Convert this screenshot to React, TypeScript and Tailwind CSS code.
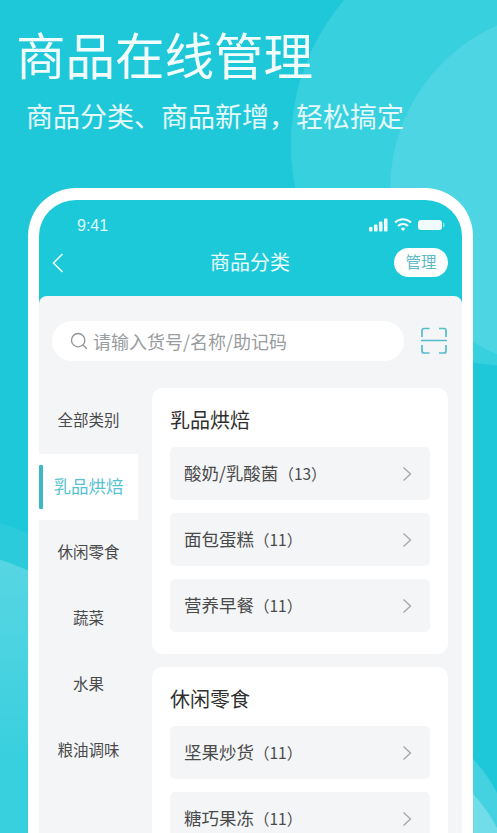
import { Search } from "lucide-react";

const font = "font-['Noto_Sans_CJK_SC','Noto_Sans',sans-serif]";

function Chevron() {
  return (
    <svg width="10" height="16" viewBox="0 0 10 16" fill="none" stroke="#a3a7ab" strokeWidth="1.3">
      <path d="M1.5 1.5 8.5 8 1.5 14.5" />
    </svg>
  );
}

function Item({ name, count }: { name: string; count: string }) {
  return (
    <div className="flex h-[53px] items-center justify-between rounded-[5px] bg-[#f3f5f7] pl-[14px] pr-[18px]">
      <span className="text-[17.5px] text-[#4a4a4a]">
        {name}
        <span className="text-[15.5px]">（{count}）</span>
      </span>
      <Chevron />
    </div>
  );
}

function Card({ title, items }: { title: string; items: [string, string][] }) {
  return (
    <div className="rounded-[10px] bg-white px-[18px] pb-[22px] pt-[15px]">
      <div className="text-[20px] leading-[34px] text-[#2f2f2f]">{title}</div>
      <div className="mt-[10px] flex flex-col gap-[13px]">
        {items.map(([n, c]) => (
          <Item key={n} name={n} count={c} />
        ))}
      </div>
    </div>
  );
}

const cats = ["全部类别", "乳品烘焙", "休闲零食", "蔬菜", "水果", "粮油调味"];

export default function App() {
  return (
    <div className={`relative h-[833px] w-[497px] overflow-hidden bg-[#1fc8d9] ${font}`}>
      <div className="absolute left-[291px] top-[-78px] h-[444px] w-[444px] rounded-full bg-[#37d0df]" />
      <div className="absolute left-[390px] top-[10px] h-[360px] w-[360px] rounded-full bg-[#4dd5e3]" />
      <div className="absolute left-[-285px] top-[515px] h-[450px] w-[450px] rounded-full bg-[#2ccbdb]" />
      <div className="absolute left-[-269px] top-[551px] h-[418px] w-[418px] rounded-full bg-gradient-to-b from-[#58d6e3] to-[#38cfde] to-50%" />
      <div className="absolute left-[217px] top-[712px] h-[296px] w-[296px] rounded-full bg-[#45d2e0]" />
      <div className="absolute left-[217px] top-[747px] h-[296px] w-[296px] rounded-full bg-[#70dde8]" />

      <div className="relative">
        <h1 className="pl-[16px] pt-[26px] text-[49.5px] leading-[56px] text-[#f2fdfe]">商品在线管理</h1>
        <p className="mt-[16px] pl-[26px] text-[27px] leading-[36px] text-[#e4f9fb]">
          商品分类、商品新增，轻松搞定
        </p>

        <div className="ml-[28px] mt-[54px] h-[700px] w-[445px] overflow-hidden rounded-t-[48px] border-x-[11px] border-t-[12px] border-white bg-[#1bc9d9]">
          <div className="flex h-[40px] items-end justify-between pl-[38px] pr-[17px]">
            <span className="font-['Liberation_Sans',sans-serif] text-[16px] leading-[28px] text-[#dff8fa]">9:41</span>
            <svg width="76" height="14" viewBox="0 0 76 14" className="mb-[8px]" fill="#f0fcfd">
              <rect x="0" y="9" width="3.5" height="4.5" rx="1" />
              <rect x="5" y="6.5" width="3.5" height="7" rx="1" />
              <rect x="10" y="3.5" width="3.5" height="10" rx="1" />
              <rect x="15" y="0.5" width="3.5" height="13" rx="1" />
              <path d="M26 4.5a11.5 11.5 0 0 1 16 0" fill="none" stroke="#f0fcfd" strokeWidth="2" />
              <path d="M29 8a7 7 0 0 1 10 0" fill="none" stroke="#f0fcfd" strokeWidth="2" />
              <path d="M31.8 10.8a3 3 0 0 1 4.4 0L34 13z" />
              <rect x="49" y="2" width="24" height="10" rx="3" />
              <rect x="74" y="5" width="1.4" height="4" rx="0.7" opacity="0.6" />
            </svg>
          </div>
          <div className="mt-[8px] flex h-[29px] items-center justify-between pl-[13px] pr-[14px]">
            <span className="flex w-[54px]">
              <svg width="12" height="20" viewBox="0 0 12 20" fill="none" stroke="#e8fbfc" strokeWidth="1.7">
                <path d="M10.5 1 1.5 10 10.5 19" />
              </svg>
            </span>
            <span className="pb-[2px] text-[20px] text-[#e8fbfc]">商品分类</span>
            <span className="flex h-[29px] w-[54px] items-center justify-center rounded-full bg-white pb-[1px] text-[15.5px] text-[#5cb9c6]">
              管理
            </span>
          </div>

          <div className="mt-[19px] h-[600px] rounded-t-[8px] bg-[#f3f5f7] pt-[25px]">
            <div className="flex items-center pl-[13px]">
              <div className="flex h-[40px] w-[352px] items-center rounded-full bg-white pl-[17px]">
                <Search size={20} strokeWidth={1.6} color="#8f9296" />
                <span className="ml-[4px] text-[18px] text-[#9a9da0]">请输入货号/名称/助记码</span>
              </div>
              <svg width="28" height="28" viewBox="0 0 28 28" className="ml-[16px]" fill="none" stroke="#55bcca" strokeWidth="1.7">
                <path d="M2 10V3.5a2 2 0 0 1 2-2h5.5M19 1.5h5a2 2 0 0 1 2 2V10M1 13.5h26M2 18v6a2 2 0 0 0 2 2h5.5M19 26h5a2 2 0 0 0 2-2v-6" />
              </svg>
            </div>

            <div className="mt-[27px] flex">
              <div className="w-[99px] shrink-0">
                {cats.map((c) =>
                  c === "乳品烘焙" ? (
                    <div key={c} className="relative flex h-[66px] items-center justify-center bg-white pb-[2px] text-[17.5px] text-[#55c2cf]">
                      <span className="absolute left-0 top-[11px] h-[44px] w-[4px] rounded-[1px] bg-[#3cb9c6]" />
                      {c}
                    </div>
                  ) : (
                    <div key={c} className="flex h-[66px] items-center justify-center pb-[2px] text-[15.5px] text-[#4a4a4a]">
                      {c}
                    </div>
                  ),
                )}
              </div>
              <div className="ml-[14px] flex w-[296px] shrink-0 flex-col gap-[13px]">
                <Card
                  title="乳品烘焙"
                  items={[
                    ["酸奶/乳酸菌", "13"],
                    ["面包蛋糕", "11"],
                    ["营养早餐", "11"],
                  ]}
                />
                <Card
                  title="休闲零食"
                  items={[
                    ["坚果炒货", "11"],
                    ["糖巧果冻", "11"],
                  ]}
                />
              </div>
            </div>
          </div>
        </div>
      </div>
    </div>
  );
}
